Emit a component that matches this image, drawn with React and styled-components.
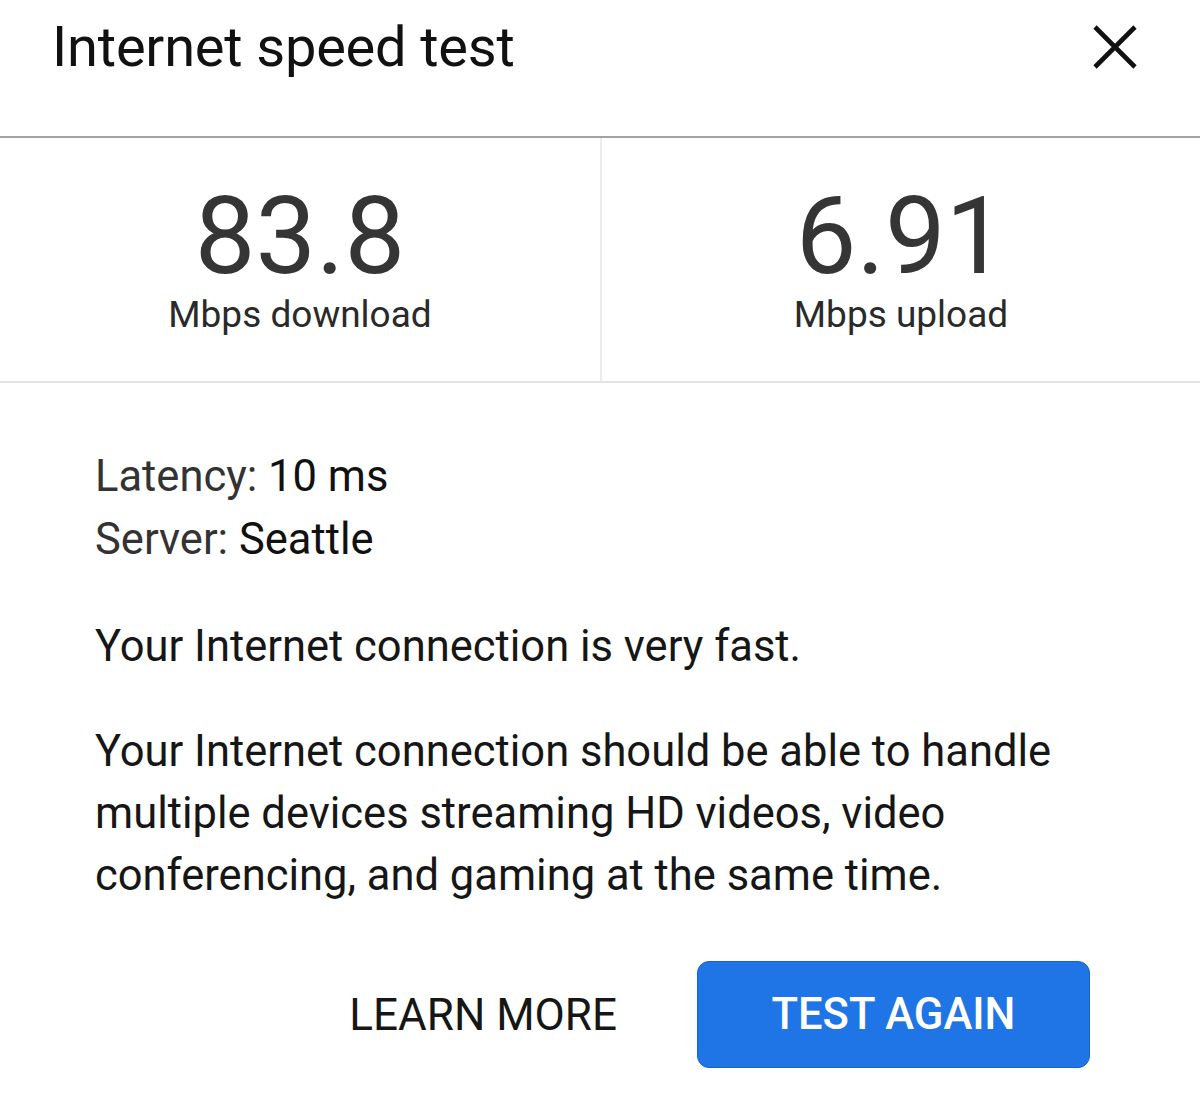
import React from 'react'
import styled, { createGlobalStyle } from 'styled-components'

const GlobalStyle = createGlobalStyle`
  html, body {
    margin: 0;
    padding: 0;
    background: #ffffff;
  }

  body {
    font-family: Roboto, 'Noto Sans', 'Liberation Sans', sans-serif;
    color: #1c1c1c;
  }
`

const stats = [
  { value: '83.8', label: 'Mbps download' },
  { value: '6.91', label: 'Mbps upload' },
]

function CloseIcon() {
  return (
    <svg width="46" height="44" viewBox="0 0 46 44" aria-hidden="true">
      <path
        d="M3 2 L43 42 M43 2 L3 42"
        stroke="#111"
        strokeWidth="4.6"
        strokeLinecap="butt"
        fill="none"
      />
    </svg>
  )
}

export default function App() {
  return (
    <>
      <GlobalStyle />
      <Dialog>
        <Header>
          <Title>Internet speed test</Title>
          <CloseButton aria-label="Close">
            <CloseIcon />
          </CloseButton>
        </Header>

        <StatsGrid>
          {stats.map((stat) => (
            <Stat key={stat.label}>
              <StatValue>{stat.value}</StatValue>
              <StatLabel>{stat.label}</StatLabel>
            </Stat>
          ))}
        </StatsGrid>

        <Body>
          <Details>
            <DetailLine>
              Latency: <DetailValue>10 ms</DetailValue>
            </DetailLine>
            <DetailLine>
              Server: <DetailValue>Seattle</DetailValue>
            </DetailLine>
          </Details>
          <Paragraph>Your Internet connection is very fast.</Paragraph>
          <Paragraph>
            Your Internet connection should be able to handle multiple devices
            streaming HD videos, video conferencing, and gaming at the same time.
          </Paragraph>
        </Body>

        <Actions>
          <TextButton>LEARN MORE</TextButton>
          <PrimaryButton>TEST AGAIN</PrimaryButton>
        </Actions>
      </Dialog>
    </>
  )
}

const Dialog = styled.div`
  width: 1200px;
  min-height: 1101px;
  background: #ffffff;
`

const Header = styled.div`
  display: flex;
  justify-content: space-between;
  align-items: flex-start;
  height: 138px;
  padding: 15px 62px 0 52px;
  box-sizing: border-box;
  border-bottom: 2px solid #a3a3a3;
`

const Title = styled.h1`
  margin: 0;
  font-size: 56px;
  line-height: 64px;
  font-weight: 400;
  color: #111111;
  letter-spacing: -0.2px;
`

const CloseButton = styled.button`
  margin-top: 10px;
  padding: 0;
  border: none;
  background: none;
  display: flex;
`

const StatsGrid = styled.div`
  display: grid;
  grid-template-columns: 1fr 1fr;
  height: 245px;
  border-bottom: 2px solid #e4e4e4;
  box-sizing: border-box;

  & > * + * {
    border-left: 2px solid #ececec;
  }
`

const Stat = styled.div`
  display: flex;
  flex-direction: column;
  align-items: center;
  padding-top: 48px;
`

const StatValue = styled.div`
  font-size: 108px;
  line-height: 100px;
  color: #353535;
`

const StatLabel = styled.div`
  margin-top: 7px;
  font-size: 37px;
  line-height: 44px;
  color: #2a2a2a;
`

const Body = styled.div`
  padding: 62px 0 0 95px;
`

const Details = styled.div`
  margin-bottom: 45px;
`

const DetailLine = styled.div`
  font-size: 43.5px;
  line-height: 63px;
  color: #333333;
`

const DetailValue = styled.span`
  color: #111111;
`

const Paragraph = styled.p`
  margin: 0 0 43px;
  width: 1010px;
  font-size: 43.5px;
  line-height: 62px;
  color: #161616;
`

const Actions = styled.div`
  display: flex;
  justify-content: flex-end;
  align-items: center;
  gap: 80px;
  padding: 11px 110px 0 0;
`

const TextButton = styled.button`
  padding: 0;
  border: none;
  background: none;
  font-family: inherit;
  font-size: 44px;
  font-weight: 400;
  color: #161616;
`

const PrimaryButton = styled.button`
  width: 393px;
  height: 107px;
  border: 1.5px solid #1a62c9;
  border-radius: 12px;
  background: #2075e6;
  font-family: inherit;
  font-size: 43.5px;
  font-weight: 500;
  color: #ffffff;
`
